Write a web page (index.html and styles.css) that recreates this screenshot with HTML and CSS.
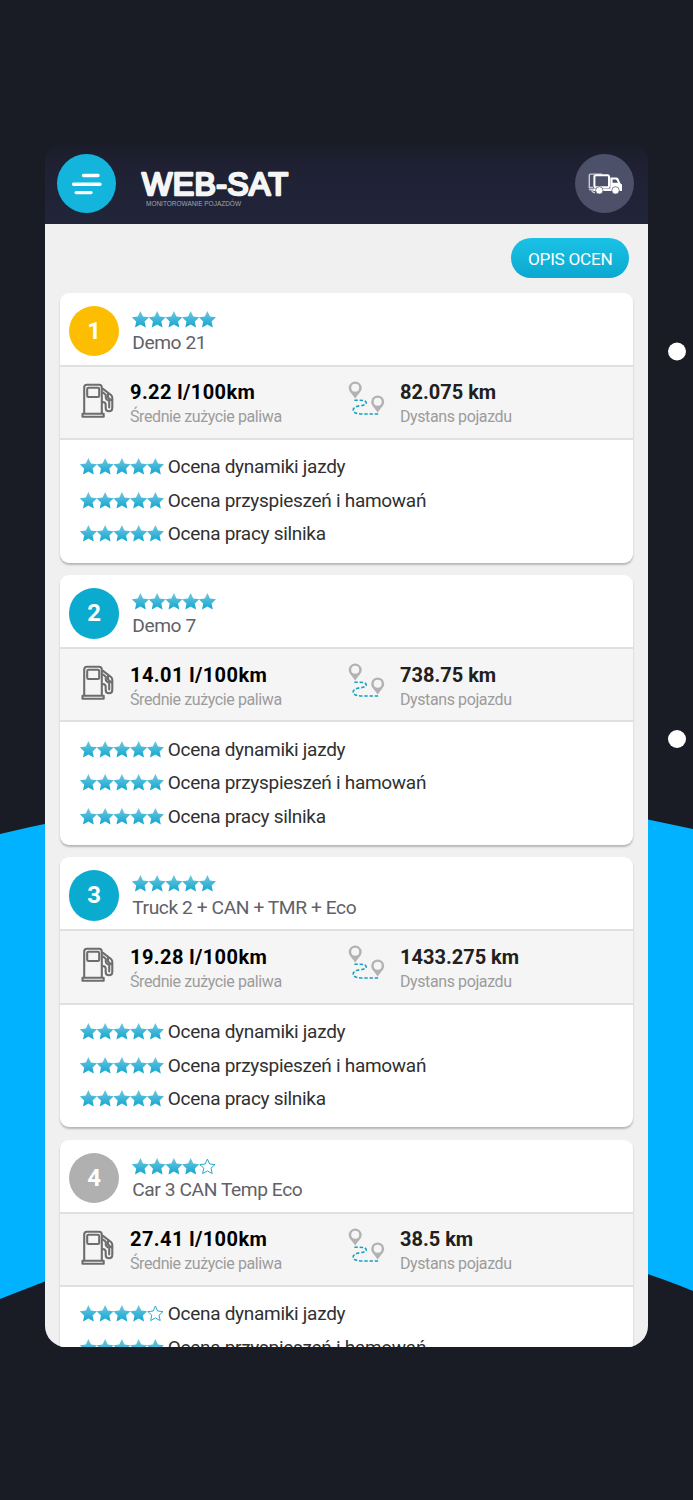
FILE: index.html
```html
<!DOCTYPE html>
<html lang="pl">
<head>
<meta charset="utf-8">
<title>WEB-SAT</title>
<link rel="stylesheet" href="styles.css">
</head>
<body>
<svg class="defs" width="0" height="0" aria-hidden="true">
  <defs>
    <linearGradient id="starFill" x1="0" y1="0" x2="0" y2="1"><stop offset="0" stop-color="#72c8e0"/><stop offset="1" stop-color="#10a6cf"/></linearGradient>
    <path id="star" d="M8.4 0 L11 5.5 L17 6.2 L12.6 10.4 L13.8 16.4 L8.4 13.5 L3 16.4 L4.2 10.4 L-0.2 6.2 L5.8 5.5 Z"/>
    <symbol id="stars5" viewBox="0 0 84 17"><g fill="url(#starFill)"><use href="#star"/><use href="#star" x="16.75"/><use href="#star" x="33.5"/><use href="#star" x="50.25"/><use href="#star" x="67"/></g></symbol>
    <symbol id="stars4" viewBox="0 0 84 17"><g fill="url(#starFill)"><use href="#star"/><use href="#star" x="16.75"/><use href="#star" x="33.5"/><use href="#star" x="50.25"/></g><path transform="translate(67 0)" d="M8.4 1 L10.6 6 L16 6.6 L12 10.2 L13.2 15.6 L8.4 12.9 L3.6 15.6 L4.8 10.2 L.8 6.6 L6.2 6 Z" fill="#fff" stroke="#25aace" stroke-width="1"/></symbol>
    <symbol id="pump" viewBox="0 0 34 36"><g fill="none" stroke="#6d6d6d" stroke-width="2.1" stroke-linejoin="round" stroke-linecap="round"><path d="M3.2 30.5V4.5Q3.2 1.7 6 1.7H18Q20.8 1.7 20.8 4.5V30.5M1.5 30.8H22.7V33.7H1.5Z"/><rect x="6.2" y="4.7" width="12" height="9.3" rx="1.3"/><path d="M22 5.8L30 12Q31.3 13.2 31.3 15V24.5Q31.3 28.3 28 28.3Q24.7 28.3 24.7 25V21.5Q24.7 19.3 21.5 19M22 9.5L24.8 11.8V14.5Q24.8 16.5 28.2 17.8V24.5"/><path d="M27 11V14.5L30.5 17.5"/></g></symbol>
    <symbol id="route" viewBox="0 0 38 36"><g fill="#b2b2b2" fill-rule="evenodd"><path id="pin" d="M7.2.5A6.5 6.5 0 0 1 13.7 7C13.7 10.7 9.2 13.8 7.2 17.8C5.2 13.8.7 10.7.7 7A6.5 6.5 0 0 1 7.2.5ZM7.2 2.8A4 4 0 1 0 7.2 10.8A4 4 0 1 0 7.2 2.8Z"/><use href="#pin" x="22.5" y="13.9"/></g><path d="M6.4 19.2H11C21 19.2 20 24.2 12 24.8C2.5 26 2.5 33 14 33H31" fill="none" stroke="#169fc0" stroke-width="1.6" stroke-dasharray="3.4 1.8"/></symbol>
  </defs>
</svg>
<div class="stage">
  <svg class="backdrop" viewBox="0 0 693 1500"><path d="M0 834 Q346 750 693 829 V1291 Q650 1273 600 1260 H100 Q46 1281 0 1299Z" fill="#00b2ff"/><circle cx="677" cy="351.5" r="9" fill="#fff"/><circle cx="677" cy="739" r="9" fill="#fff"/></svg>
  <main class="phone">
    <header class="topbar">
      <button class="round menu" aria-label="Menu"><svg width="32" height="24" viewBox="0 0 32 24"><path d="M12.5 3.5H27M2.5 12.2H29M5.2 20.6H20" stroke="#fff" stroke-width="3.4" stroke-linecap="round"/></svg></button>
      <svg class="logo" width="152" height="46" viewBox="0 0 152 46"><text class="brand" x="2" y="29.8" textLength="146">WEB-SAT</text><text class="tagline" x="6" y="40.5" textLength="95" lengthAdjust="spacingAndGlyphs">MONITOROWANIE POJAZDÓW</text></svg>
      <button class="round truck" aria-label="Pojazdy"><svg width="36" height="24" viewBox="0 0 36 24"><g fill="none" stroke="#c9cad7" stroke-width="1.4"><path d="M6 2.1H3.5Q2.3 2.1 2.3 3.3V15.5H6M6 2.1H15M2 17.5H6M4.5 17.5Q5 20.5 8 20.7"/></g><rect x="7.4" y="3.2" width="14.6" height="12" rx="1.5" fill="#4d5069" stroke="#fff" stroke-width="2"/><path fill="#fff" fill-rule="evenodd" d="M23.3 5.5H29Q30.8 5.5 31.5 6.8L33.3 11.2L35 12.5V19H6.2V16.6H23.3ZM25.6 7.6V10.8H31L29.6 8.3Q29.2 7.6 28.4 7.6Z"/><g fill="#fff" stroke="#4d5069" stroke-width=".7"><circle cx="12.3" cy="18.4" r="3.7"/><circle cx="28.5" cy="18.4" r="3.7"/></g></svg></button>
    </header>
    <div class="actions"><button class="pill">OPIS OCEN</button></div>
    <div class="cards">
      <article class="card">
        <div class="head"><span class="rank gold">1</span><div class="who"><svg class="stars"><use href="#stars5"/></svg><span class="name">Demo 21</span></div></div>
        <div class="stats">
          <div class="stat fuel"><svg class="pump"><use href="#pump"/></svg><div class="text"><b>9.22 l/100km</b><small>Średnie zużycie paliwa</small></div></div>
          <div class="stat dist"><svg class="route"><use href="#route"/></svg><div class="text"><b>82.075 km</b><small>Dystans pojazdu</small></div></div>
        </div>
        <ul class="ratings">
          <li><svg class="stars"><use href="#stars5"/></svg><span>Ocena dynamiki jazdy</span></li>
          <li><svg class="stars"><use href="#stars5"/></svg><span>Ocena przyspieszeń i hamowań</span></li>
          <li><svg class="stars"><use href="#stars5"/></svg><span>Ocena pracy silnika</span></li>
        </ul>
      </article>
      <article class="card">
        <div class="head"><span class="rank blue">2</span><div class="who"><svg class="stars"><use href="#stars5"/></svg><span class="name">Demo 7</span></div></div>
        <div class="stats">
          <div class="stat fuel"><svg class="pump"><use href="#pump"/></svg><div class="text"><b>14.01 l/100km</b><small>Średnie zużycie paliwa</small></div></div>
          <div class="stat dist"><svg class="route"><use href="#route"/></svg><div class="text"><b>738.75 km</b><small>Dystans pojazdu</small></div></div>
        </div>
        <ul class="ratings">
          <li><svg class="stars"><use href="#stars5"/></svg><span>Ocena dynamiki jazdy</span></li>
          <li><svg class="stars"><use href="#stars5"/></svg><span>Ocena przyspieszeń i hamowań</span></li>
          <li><svg class="stars"><use href="#stars5"/></svg><span>Ocena pracy silnika</span></li>
        </ul>
      </article>
      <article class="card">
        <div class="head"><span class="rank blue">3</span><div class="who"><svg class="stars"><use href="#stars5"/></svg><span class="name">Truck 2 + CAN + TMR + Eco</span></div></div>
        <div class="stats">
          <div class="stat fuel"><svg class="pump"><use href="#pump"/></svg><div class="text"><b>19.28 l/100km</b><small>Średnie zużycie paliwa</small></div></div>
          <div class="stat dist"><svg class="route"><use href="#route"/></svg><div class="text"><b>1433.275 km</b><small>Dystans pojazdu</small></div></div>
        </div>
        <ul class="ratings">
          <li><svg class="stars"><use href="#stars5"/></svg><span>Ocena dynamiki jazdy</span></li>
          <li><svg class="stars"><use href="#stars5"/></svg><span>Ocena przyspieszeń i hamowań</span></li>
          <li><svg class="stars"><use href="#stars5"/></svg><span>Ocena pracy silnika</span></li>
        </ul>
      </article>
      <article class="card">
        <div class="head"><span class="rank gray">4</span><div class="who"><svg class="stars"><use href="#stars4"/></svg><span class="name">Car 3 CAN Temp Eco</span></div></div>
        <div class="stats">
          <div class="stat fuel"><svg class="pump"><use href="#pump"/></svg><div class="text"><b>27.41 l/100km</b><small>Średnie zużycie paliwa</small></div></div>
          <div class="stat dist"><svg class="route"><use href="#route"/></svg><div class="text"><b>38.5 km</b><small>Dystans pojazdu</small></div></div>
        </div>
        <ul class="ratings">
          <li><svg class="stars"><use href="#stars4"/></svg><span>Ocena dynamiki jazdy</span></li>
          <li><svg class="stars"><use href="#stars5"/></svg><span>Ocena przyspieszeń i hamowań</span></li>
        </ul>
      </article>
    </div>
  </main>
</div>
</body>
</html>
```
FILE: styles.css
```css
* { box-sizing: border-box; }
body { margin: 0; background: #191c24; font-family: Roboto, sans-serif; }
button { border: 0; padding: 0; font: inherit; }
svg { display: block; flex: none; }
.defs { position: absolute; }
.stage { position: relative; height: 1500px; overflow: hidden; padding: 141px 0 0 45.3px; }
.backdrop { position: absolute; inset: 0; width: 693px; height: 1500px; }
.phone { position: relative; width: 602.5px; height: 1206px; border-radius: 21px; overflow: hidden; background: linear-gradient(#191c27 60px, #f0f0f0 60px); }
.topbar { height: 83.3px; display: flex; align-items: center; padding: 2px 13.5px 0 11.7px; background: linear-gradient(#191c27, #1f2133 30%, #21253a); }
.round { width: 59px; height: 59px; border-radius: 50%; display: flex; align-items: center; justify-content: center; }
.menu { background: #14b5dc; }
.menu svg { margin-left: 2px; }
.truck { background: #4d5069; margin-left: auto; }
.logo { margin: 8px 0 0 24px; }
.brand { font: 32px "Liberation Sans", sans-serif; fill: #f5f5f5; stroke: #f5f5f5; stroke-width: 2.5px; stroke-linejoin: round; }
.tagline { font: 7.8px "Liberation Sans", sans-serif; fill: #a3a5af; }
.actions { height: 68.5px; display: flex; justify-content: flex-end; padding: 13.5px 18.5px 0 0; }
.pill { width: 118px; height: 40px; border-radius: 20px; background: linear-gradient(#1bc2e5, #0ba8d1); color: #fff; font-size: 17.2px; letter-spacing: -.25px; padding-top: 2px; }
.cards { padding: 0 15.2px; display: flex; flex-direction: column; gap: 12.35px; }
.card { flex: none; height: 270px; border-radius: 9px; overflow: hidden; background: #fff; box-shadow: 0 2px 2px #b7b7b7; }
.head { height: 72px; display: flex; padding: 13px 0 0 8.3px; gap: 13px; }
.rank { width: 50.5px; height: 50.5px; border-radius: 50%; color: #fff; font-size: 24px; font-weight: 700; line-height: 50px; text-align: center; }
.gold { background: #fdbd00; }
.blue { background: #0babd0; }
.gray { background: #b0b0b0; }
.stars { width: 84px; height: 17px; }
.who { padding-top: 5px; }
.name { display: block; font-size: 19.2px; line-height: 24px; letter-spacing: -.42px; margin-top: 3.5px; color: #616168; }
.stats { height: 75.3px; background: #f5f5f5; border-top: 2px solid #e0e0e0; border-bottom: 2px solid #e0e0e0; display: flex; }
.stat { display: flex; }
.fuel { width: 287.5px; padding-left: 21px; gap: 14.5px; }
.pump { width: 34px; height: 36px; margin-top: 16px; }
.route { width: 38px; height: 36px; margin-top: 14px; }
.dist { gap: 14px; }
.text { padding-top: 13.5px; white-space: nowrap; }
.text b { display: block; font-size: 20px; line-height: 24px; color: #202020; }
.fuel b { color: #000; letter-spacing: .42px; }
.text small { display: block; font-size: 16px; line-height: 20px; letter-spacing: -.4px; margin-top: 3px; color: #9c9c9c; }
.ratings { list-style: none; margin: 0; padding: 9.5px 0 0 20px; }
.ratings li { height: 33.5px; display: flex; align-items: center; gap: 3.3px; font-size: 19px; letter-spacing: -.29px; color: #303030; white-space: nowrap; }
.ratings span { padding-top: 1px; }
.ratings .stars { margin-top: 1px; }
```
